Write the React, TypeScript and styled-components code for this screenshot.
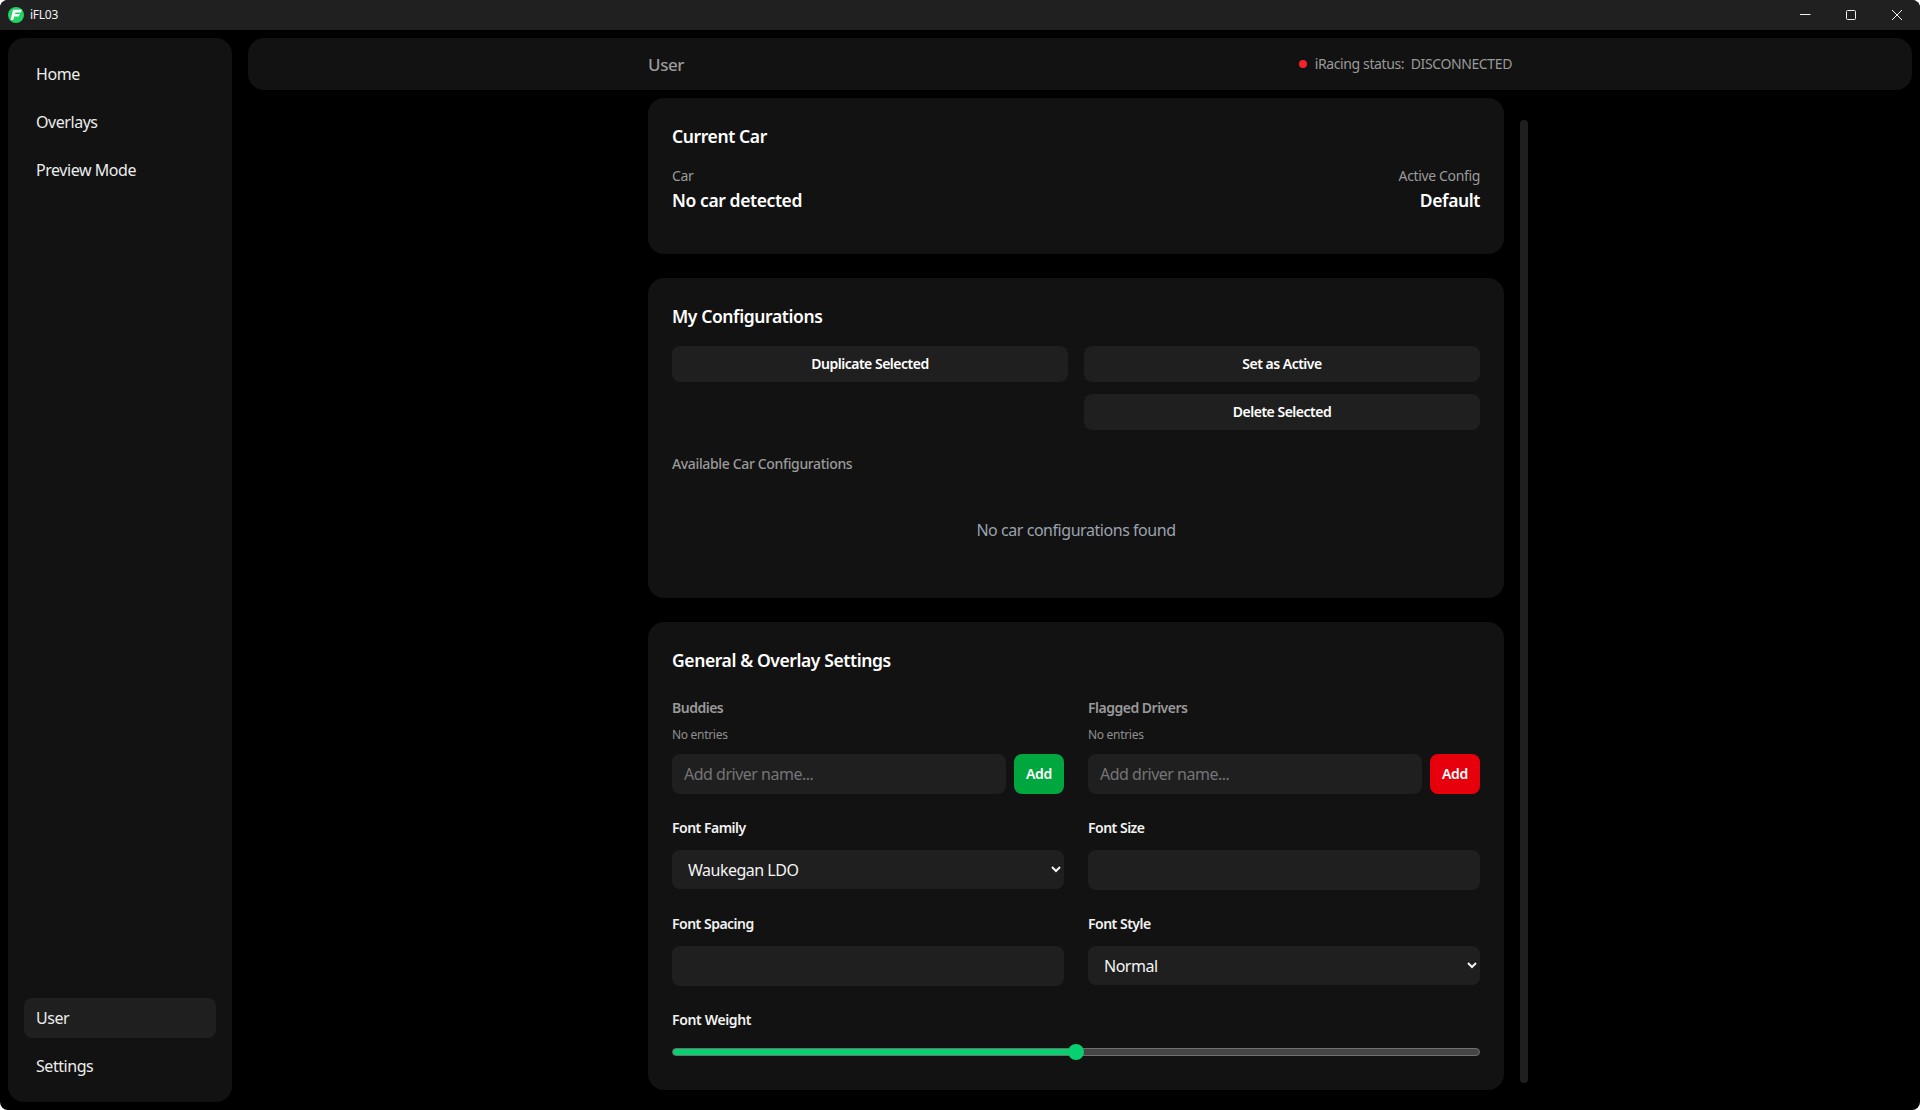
import React from "react";
import styled, { createGlobalStyle } from "styled-components";

const Global = createGlobalStyle`
  html, body { margin: 0; padding: 0; height: 100%; background: #fff; }
  #root { height: 100%; }
  * { box-sizing: border-box; }
  body { font-family: "Noto Sans", "Open Sans", sans-serif; color: #fff; overflow: hidden; letter-spacing: -0.45px; }
`;

const Shell = styled.div`
  width: 100%; height: 100vh; display: flex; flex-direction: column;
  background: #000; border-radius: 8px; overflow: hidden;
`;
const TitleBar = styled.header`
  height: 30px; flex: none; display: flex; align-items: center; background: #202020;
`;
const AppTitle = styled.div`
  display: flex; align-items: center; gap: 6px; padding-left: 8px; flex: 1;
  font-size: 12px; letter-spacing: -0.25px; color: #f2f2f2; line-height: 28px; padding-bottom: 1px;
`;
const WinButton = styled.div`
  width: 46px; height: 30px; display: flex; align-items: center; justify-content: center; color: #f0f0f0;
`;
const Body = styled.div`
  flex: 1; min-height: 0; display: flex; gap: 16px; padding: 8px;
`;
const Sidebar = styled.aside`
  width: 224px; flex: none; background: #121212; border-radius: 16px; padding: 16px;
  display: flex; flex-direction: column; justify-content: space-between;
`;
const NavGroup = styled.nav`
  display: flex; flex-direction: column; gap: 8px;
`;
const NavItem = styled.div<{ $active?: boolean }>`
  height: 40px; border-radius: 8px; padding: 0 12px; display: flex; align-items: center;
  font-size: 16px; color: #ececec; background: ${(p) => (p.$active ? "#1f1f1f" : "transparent")};
`;
const Main = styled.main`
  flex: 1; min-width: 0; display: flex; flex-direction: column; gap: 8px;
`;
const TopBar = styled.div`
  height: 52px; flex: none; background: #121212; border-radius: 16px; display: flex; justify-content: center;
`;
const TopInner = styled.div`
  width: 896px; padding: 0 16px; display: flex; align-items: center; justify-content: space-between;
`;
const PageTitle = styled.div`
  font-size: 17px; letter-spacing: -0.4px; font-weight: 500; color: #9a9a9a;
`;
const Status = styled.div`
  display: flex; align-items: center; gap: 8px; font-size: 14px; line-height: 18px; letter-spacing: -0.38px; color: #9a9a9a;
`;
const StatusDot = styled.span`
  width: 8px; height: 8px; border-radius: 50%; background: #f5222d;
`;
const StatusText = styled.span`
  white-space: pre;
`;
const ContentArea = styled.div`
  flex: 1; min-height: 0; display: flex; justify-content: center;
`;
const Scroller = styled.div`
  position: relative; width: 896px; padding: 0 24px 0 16px; overflow: hidden;
  display: flex; flex-direction: column; gap: 24px;
`;
const ScrollThumb = styled.div`
  position: absolute; right: 0; top: 22px; bottom: 19px; width: 8px; border-radius: 4px; background: #1f1f1f;
`;
const Card = styled.section<{ $bottom?: number }>`
  flex: none; background: #121212; border-radius: 16px; padding: 24px;
  padding-bottom: ${(p) => p.$bottom ?? 24}px;
`;
const CardTitle = styled.h2<{ $gap?: number }>`
  margin: 0 0 ${(p) => p.$gap ?? 16}px; font-size: 17.5px; line-height: 28px; letter-spacing: -0.4px; font-weight: 600; color: #fff;
`;
const CarRow = styled.div`
  display: flex; justify-content: space-between; margin-bottom: 16px;
`;
const CarCol = styled.div<{ $right?: boolean }>`
  display: flex; flex-direction: column; align-items: ${(p) => (p.$right ? "flex-end" : "flex-start")};
`;
const SmallLabel = styled.div`
  font-size: 14px; line-height: 20px; letter-spacing: -0.35px; color: #9a9a9a;
`;
const CarValue = styled.div`
  font-size: 17.5px; line-height: 28px; letter-spacing: -0.4px; font-weight: 600; color: #fff;
`;
const ButtonGrid = styled.div`
  display: grid; grid-template-columns: 1fr 1fr; gap: 12px 16px; margin-bottom: 24px;
`;
const GhostButton = styled.button<{ $col?: number }>`
  height: 36px; border: 0; border-radius: 8px; background: #1f1f1f; color: #fff; font: inherit;
  font-size: 14px; font-weight: 600; letter-spacing: -0.5px; padding: 0 0 2px;
  grid-column: ${(p) => p.$col ?? "auto"};
`;
const SectionLabel = styled.div`
  font-size: 14px; line-height: 20px; font-weight: 500; letter-spacing: -0.35px; color: #9a9a9a;
`;
const EmptyState = styled.div`
  margin-top: 12px; padding: 32px 0; text-align: center; font-size: 16px; line-height: 24px; color: #9ca3af;
`;
const TwoCols = styled.div`
  display: grid; grid-template-columns: 1fr 1fr; gap: 24px;
`;
const Field = styled.div`
  min-width: 0;
`;
const ListLabel = styled.div`
  font-size: 14px; line-height: 20px; font-weight: 600; letter-spacing: -0.5px; color: #9a9a9a;
`;
const NoEntries = styled.div`
  margin-top: 9px; font-size: 12px; line-height: 16px; letter-spacing: -0.3px; color: #8f8f8f;
`;
const AddRow = styled.div`
  display: flex; gap: 8px; margin-top: 11px;
`;
const TextInput = styled.input`
  flex: 1; min-width: 0; width: 100%; height: 40px; border: 0; outline: 0; border-radius: 8px; background: #1f1f1f;
  padding: 0 12px; color: #fff; font: inherit; font-size: 16px; letter-spacing: -0.5px; display: block;
  &::placeholder { color: #757575; opacity: 1; }
`;
const AddButton = styled.button<{ $color: string }>`
  width: 50px; height: 40px; flex: none; border: 0; border-radius: 8px; background: ${(p) => p.$color};
  color: #fff; font: inherit; font-size: 14px; font-weight: 600; letter-spacing: -0.25px; padding: 0 0 1px;
`;
const SettingsGrid = styled(TwoCols)`
  margin-top: 24px;
`;
const FieldLabel = styled.label`
  display: block; margin-bottom: 12px; font-size: 14px; line-height: 20px; font-weight: 600; letter-spacing: -0.5px; color: #f2f2f2;
`;
const SelectBox = styled.select`
  display: block; width: 100%; height: 39px; border: 0; outline: 0; border-radius: 8px; background: #1f1f1f;
  padding: 0 12px; color: #f5f5f5; font: inherit; font-size: 16px; letter-spacing: -0.5px; color-scheme: dark;
`;
const WeightField = styled.div`
  margin-top: 24px;
`;
const WeightLabel = styled(FieldLabel)`
  margin-bottom: 18px; letter-spacing: -0.35px;
`;
const Slider = styled.input`
  display: block; width: 100%; height: 8px; margin: 0; appearance: none; -webkit-appearance: none; border-radius: 4px;
  border: 1px solid #6f6f6f; outline: 0;
  background: linear-gradient(to right, #07d070 50%, #454545 50%);
  &::-webkit-slider-thumb {
    -webkit-appearance: none; width: 16px; height: 16px; border-radius: 50%; background: #07d070; border: 0;
  }
`;

const Logo = () => (
  <svg width="16" height="16" viewBox="0 0 16 16" aria-hidden="true">
    <circle cx="8" cy="8" r="8" fill="#22d366" />
    <path d="M5 2.8h8.8l-1 2.7H7.4L7 7h4.8l-1 2.6H6.2L5.2 13H2.6z" fill="#fff" />
  </svg>
);

const WinIcon = ({ kind }: { kind: "min" | "max" | "close" }) => (
  <svg width="12" height="12" viewBox="0 0 12 12" fill="none" stroke="currentColor" strokeWidth="1" aria-hidden="true">
    {kind === "min" && <path d="M1 5.5h10.5" />}
    {kind === "max" && <rect x="1.5" y="1.5" width="9" height="9" rx="1" />}
    {kind === "close" && <path d="M1 1l10 10M11 1L1 11" />}
  </svg>
);

export default function App() {
  return (
    <>
      <Global />
      <Shell>
        <TitleBar>
          <AppTitle>
            <Logo />
            iFL03
          </AppTitle>
          <WinButton><WinIcon kind="min" /></WinButton>
          <WinButton><WinIcon kind="max" /></WinButton>
          <WinButton><WinIcon kind="close" /></WinButton>
        </TitleBar>
        <Body>
          <Sidebar>
            <NavGroup>
              <NavItem>Home</NavItem>
              <NavItem>Overlays</NavItem>
              <NavItem>Preview Mode</NavItem>
            </NavGroup>
            <NavGroup>
              <NavItem $active>User</NavItem>
              <NavItem>Settings</NavItem>
            </NavGroup>
          </Sidebar>
          <Main>
            <TopBar>
              <TopInner>
                <PageTitle>User</PageTitle>
                <Status>
                  <StatusDot />
                  <StatusText>iRacing status:  DISCONNECTED</StatusText>
                </Status>
              </TopInner>
            </TopBar>
            <ContentArea>
              <Scroller>
                <ScrollThumb />
                <Card>
                  <CardTitle>Current Car</CardTitle>
                  <CarRow>
                    <CarCol>
                      <SmallLabel>Car</SmallLabel>
                      <CarValue>No car detected</CarValue>
                    </CarCol>
                    <CarCol $right>
                      <SmallLabel>Active Config</SmallLabel>
                      <CarValue>Default</CarValue>
                    </CarCol>
                  </CarRow>
                </Card>
                <Card>
                  <CardTitle>My Configurations</CardTitle>
                  <ButtonGrid>
                    <GhostButton>Duplicate Selected</GhostButton>
                    <GhostButton>Set as Active</GhostButton>
                    <GhostButton $col={2}>Delete Selected</GhostButton>
                  </ButtonGrid>
                  <SectionLabel>Available Car Configurations</SectionLabel>
                  <EmptyState>No car configurations found</EmptyState>
                </Card>
                <Card $bottom={34}>
                  <CardTitle $gap={24}>General &amp; Overlay Settings</CardTitle>
                  <TwoCols>
                    <Field>
                      <ListLabel>Buddies</ListLabel>
                      <NoEntries>No entries</NoEntries>
                      <AddRow>
                        <TextInput placeholder="Add driver name..." />
                        <AddButton $color="#00a63e">Add</AddButton>
                      </AddRow>
                    </Field>
                    <Field>
                      <ListLabel>Flagged Drivers</ListLabel>
                      <NoEntries>No entries</NoEntries>
                      <AddRow>
                        <TextInput placeholder="Add driver name..." />
                        <AddButton $color="#e7000b">Add</AddButton>
                      </AddRow>
                    </Field>
                  </TwoCols>
                  <SettingsGrid>
                    <Field>
                      <FieldLabel>Font Family</FieldLabel>
                      <SelectBox defaultValue="Waukegan LDO">
                        <option>Waukegan LDO</option>
                      </SelectBox>
                    </Field>
                    <Field>
                      <FieldLabel>Font Size</FieldLabel>
                      <TextInput />
                    </Field>
                    <Field>
                      <FieldLabel>Font Spacing</FieldLabel>
                      <TextInput />
                    </Field>
                    <Field>
                      <FieldLabel>Font Style</FieldLabel>
                      <SelectBox defaultValue="Normal">
                        <option>Normal</option>
                      </SelectBox>
                    </Field>
                  </SettingsGrid>
                  <WeightField>
                    <WeightLabel>Font Weight</WeightLabel>
                    <Slider type="range" min={0} max={100} defaultValue={50} />
                  </WeightField>
                </Card>
              </Scroller>
            </ContentArea>
          </Main>
        </Body>
      </Shell>
    </>
  );
}
